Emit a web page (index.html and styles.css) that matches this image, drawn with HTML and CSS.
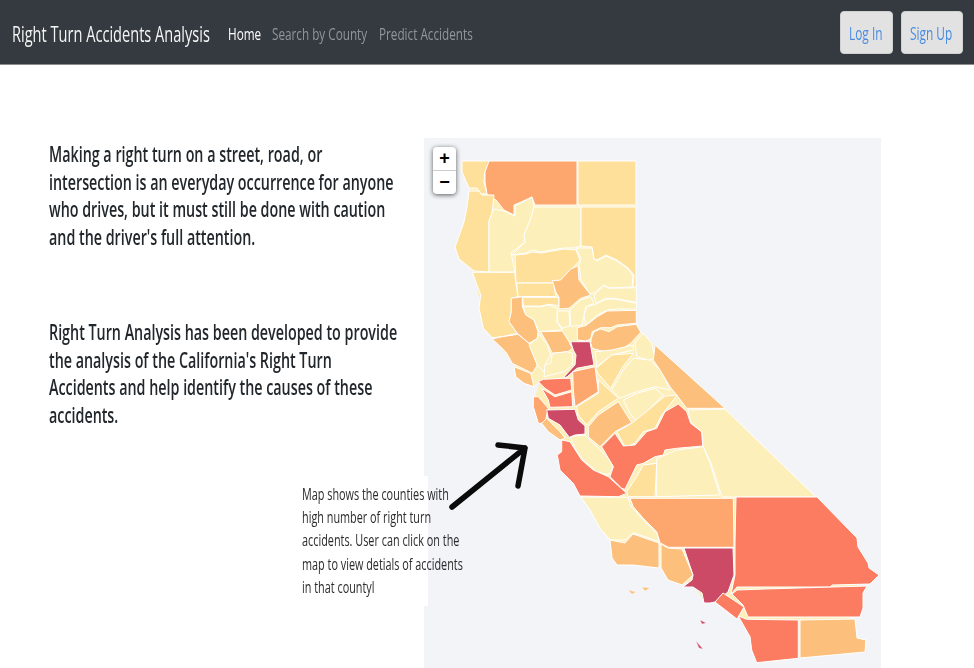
FILE: index.html
```html
<!DOCTYPE html>
<html lang="en">
<head>
<meta charset="utf-8">
<title>Right Turn Accidents Analysis</title>
<link rel="stylesheet" href="styles.css">
</head>
<body>
<nav class="navbar">
  <a class="brand"><span class="sq">Right Turn Accidents Analysis</span></a>
  <a class="link link-home"><span class="sq">Home</span></a>
  <a class="link link-search"><span class="sq">Search by County</span></a>
  <a class="link link-predict"><span class="sq">Predict Accidents</span></a>
  <div class="actions">
    <button class="btn btn-login"><span class="sq">Log In</span></button>
    <button class="btn btn-signup"><span class="sq">Sign Up</span></button>
  </div>
</nav>
<main class="content">
  <section class="intro">
    <p class="para"><span class="sq-block">Making a right turn on a street, road, or<br>intersection is an everyday occurrence for anyone<br>who drives, but it must still be done with caution<br>and the driver's full attention.</span></p>
    <p class="para"><span class="sq-block">Right Turn Analysis has been developed to provide<br>the analysis of the California's Right Turn<br>Accidents and help identify the causes of these<br>accidents.</span></p>
  </section>
  <section class="map">
    <svg class="map-svg" width="457" height="530" viewBox="424 138 457 530">
      <polygon class="state" points="462,161 636,161 636,323 640,332 725,408 810,497 850,540 860,575 855,593 850,617 850,640 845,650 760,660 752,637 740,618 717,602 704,601 693,585 668,578 663,566 633,563 619,563 612,540 602,528 583,497 575,483 559,455 564,442 543,423 535,397 540,382 534,385 516,367 494,339 481,308 474,272 461,259 457,247 469,207 471,191 464,172"/>
      <g class="counties">
        <polygon class="c2" points="462,161 491,161 485,172 484,182 487,194 481,194 477,188 469,188 462,172"/>
        <polygon class="c4" points="489,161 577,161 577,205 535,205 532,197 521,202 514,205 514,215 504,210 496,200 487,194 485,182 485,172"/>
        <polygon class="c2" points="578,161 636,161 636,205 578,205"/>
        <polygon class="c2" points="469,191 479,191 482,195 494,195 492,213 489,221 489,272 474,271 459,259 455,247 464,222 467,207"/>
        <polygon class="c1" points="494,209 504,211 515,216 515,206 532,197 534,207 531,218 524,235 525,242 511,253 515,272 489,272 489,221 492,213"/>
        <polygon class="c1" points="534,207 581,207 581,246 574,248 564,248 551,250 541,252 532,250 526,253 512,255 525,242 524,235 531,218"/>
        <polygon class="c2" points="581,207 636,207 636,287 633,287 634,275 628,268 617,260 606,255 597,260 594,259 592,247 581,246"/>
        <polygon class="c2" points="515,255 526,254 532,252 541,253 564,249 576,250 580,260 571,270 561,281 552,283 516,283"/>
        <polygon class="c1" points="576,248 592,248 594,259 597,261 606,256 617,261 628,269 633,276 632,287 609,288 604,285 594,293 590,294 581,280 579,265 581,259"/>
        <polygon class="c2" points="472.3,272.3 514.7,272.3 515.7,281.7 518,296.7 511.3,298.3 511.3,311.7 509,321.7 517.3,333.3 502.3,336.7 492.3,337.7 483.3,328.3 479,308.3 480.7,295"/>
        <polygon class="c2" points="516.7,283 553.3,283 556,296.5 518,296.5"/>
        <polygon class="c2" points="522.7,297.3 559,297.3 559,305.7 549,304.3 540.7,306 523.3,306"/>
        <polygon class="c3" points="578,265.7 579,280 590.7,295 580.7,298.3 569,308.3 559,309 559,297.3 555.7,291.7 552.3,280.7 560.7,280 570.7,269"/>
        <polygon class="c1" points="609,288.3 636.3,287.7 636.3,302.3 614,298.3 605.7,298.3 595.7,303.3 594,295 604,285.7"/>
        <polygon class="c1" points="595.7,304.3 605.7,299.3 614,299 636.3,303.3 636.3,309 615.7,309 607.3,310 597.3,315 585.7,325 584,315 587.3,306.7"/>
        <polygon class="c1" points="590.7,296.7 594,303.3 585.7,306.7 584,315 582.3,325 570.7,326.7 570,310 580.7,300"/>
        <polygon class="c3" points="585.7,325.7 597.3,316.7 607.3,311 636.3,310.3 636.3,323.3 617.3,325 610.7,327.7 600.7,327.7 592.3,331.7 590.7,339 585.7,341 577.3,340 577.3,327.7"/>
        <polygon class="c3" points="591.3,338.3 594,331.7 600.7,329 609,331.7 617.3,326.7 636.3,324.3 640.7,332.3 630.7,343.3 620.7,350 604,351.7 592.3,348.3 590.7,343.3"/>
        <polygon class="c1" points="557.3,311 569,311 569.7,325.7 562.3,328.3 557.3,321.7"/>
        <polygon class="c1" points="523.3,306.7 540.7,306.7 549,305 557.3,308.3 556.7,321.7 562.3,330 539,331.7 534,320 525.7,315"/>
        <polygon class="c3" points="511.3,298.3 522.3,296.7 522.3,306.7 525.7,315 534,320 538,331.7 537.3,338.3 529,343.3 517.3,333.3 509,321.7 511.3,311.7"/>
        <polygon class="c3" points="492.3,339 502.3,336.7 518,334.3 529,343.3 537.3,365 532.3,373.3 522.3,368.3 512.3,363.3 505.7,351.7"/>
        <polygon class="c1" points="539,333.3 547.3,345 550.7,355 545.7,363.3 544,372.3 537.3,365 529,345 537.3,338.3"/>
        <polygon class="c3" points="540.7,331.7 562.3,331 569,341.7 572.3,348.3 568,351.7 552.3,353.3 547.3,343.3"/>
        <polygon class="c1" points="552.3,353.3 567.3,351.7 572.3,353.3 572.3,365 564,371.7 544,376.7 544.7,365 550.7,363.3"/>
        <polygon class="c3" points="514,366.7 522.3,370 530.7,373.3 534,386.7 524,383.3 515.7,376.7"/>
        <polygon class="c6" points="570.7,341.7 590,341.7 594,365 576.7,368.3 567.3,376.7 562.7,378.3 575,365 576,355 573.3,350"/>
        <polygon class="c4" points="572.7,371.7 595,366.7 598.3,391.7 575,406.7 573.3,390"/>
        <polygon class="c1" points="595,351.7 611.7,350 633.3,345 633.3,350 611.7,355 596.7,366.7"/>
        <polygon class="c2" points="596,368.3 611.7,355 633.3,353.3 621.7,368.3 610.7,388.3 598.3,374"/>
        <polygon class="c1" points="611.7,390 623.3,370 633.3,358.3 650,360 661.7,371.7 670,390 655,386.7 636.7,391.7 623.3,396.7 620,398.3"/>
        <polygon class="c1" points="635,341.7 643.3,333.3 651.7,343.3 655,358.3 648.3,360 636.7,356.7"/>
        <polygon class="c3" points="655,345 725,408.3 686.7,408.3 676.7,395 670,386.7 660,370 653.3,360"/>
        <polygon class="c2" points="598.3,380 618.3,398.3 598.3,411.7 586.7,425 578.3,415 576.7,406.7 598.3,393.3"/>
        <polygon class="c1" points="623.3,400 636.7,393.3 655,388.3 663.3,395 648.3,410 636.7,421.7 630,413.3"/>
        <polygon class="c2" points="616.7,431.7 631.7,423.3 648.3,410 665,396 677.3,395 661.7,415 655,428.3 643.3,431.7 635,443.3 625,446.7"/>
        <polygon class="c3" points="588.3,426.7 598.3,415 618.3,401.7 631.7,422.7 615,431.7 600,446.7 588.3,436.7"/>
        <polygon class="c5" points="601.7,446.7 615,433.3 623.3,446 635,445 646.7,431.7 656.7,428.3 665,411.7 678.3,404 686.7,411.7 690.7,423.3 701.7,431.7 702.7,446 676.7,448.3 665,450 663.3,455 655,456.7 643.3,463.3 636.7,465 625,489.3 621.7,488.3 610,476.7 613.3,466.7"/>
        <polygon class="c1" points="570,436.7 585,435 598.3,448.3 608.3,458.3 613.3,466.7 608.3,475 596.7,471.7 583.3,460 575,448.3"/>
        <polygon class="c5" points="561.7,440 570,441.7 581.7,460 593.3,470 608.3,476.7 626.7,493.3 618.3,496.7 580,496 573.3,483.3 560,470 557.3,455 561.7,451.7"/>
        <polygon class="c2" points="626.7,491.7 636.7,476.7 643.3,465 656.7,463.3 655,496.7 628.3,496.7"/>
        <polygon class="c1" points="656.7,458.3 665,455 676.7,450 703.3,446.7 710,463.3 720,495 656.7,496.7"/>
        <polygon class="c1" points="688,410 725,409 816,497 722,497 711,463 703,446 702,432 691,423"/>
        <polygon class="c1" points="581,497 628.3,497.3 630,505 643.3,520 656.7,533.3 659.3,541.7 633.3,532.7 625,540 610,540 600,528.3 590,510"/>
        <polygon class="c4" points="630,498.3 733.3,498.3 734,547.3 683.3,547.3 668.3,547.3 660,542.7 656.7,531.7 643.3,518.3 633.3,506.7"/>
        <polygon class="c5" points="736,497 817,497 857,538 858,547 868,563 869,568 879,575 870,584 832,585 830,587 765,587 737,587 731,594 735,575 735,543"/>
        <polygon class="c6" points="684,548 733,548 734,575 728,592 715,602 710,603 704,603 702,593 693,587 683,587 692,580 693,575"/>
        <polygon class="c3" points="661,544 668,548 682,549 693,575 682,585 668,580 661,568"/>
        <polygon class="c3" points="610,540 625,543 633,534 659,543 659,568 633,565 617,565 612,558"/>
        <polygon class="c5" points="723,593 744,607 737,619 715,602"/>
        <polygon class="c5" points="737,590 765,589 832,587 867,586 863,593 863,608 860,617 748,617 743,605 732,594"/>
        <polygon class="c5" points="738.3,616 746.7,619.3 798.3,620 798.3,658.3 756.7,662.7 751.7,650 750,636.7"/>
        <polygon class="c3" points="800,620 855,619 857,638 866,640 865,652 800,658"/>
        <polygon class="c4" points="533.3,396.7 538.3,396.7 548.3,408.3 546.7,415 545,423.3 538.3,423.3 533.3,406.7"/>
        <polygon class="c5" points="538.3,381.7 543.3,379.3 563.3,378.3 570.7,378.3 571.7,390 555,395 545,388.3"/>
        <polygon class="c5" points="541.7,388.3 555,396.7 571.7,391.7 572.7,406.7 550,407.3 548.3,400"/>
        <polygon class="c3" points="541.7,423.3 546.7,418.3 560,431.7 565,438.3 560,440 548.3,431.7"/>
        <polygon class="c6" points="546.7,410 575,409.3 578.3,420 585,426 585,434 575,435 569.3,437.3 560,425 548.3,418.3"/>
        <polygon class="c3 thin" points="628,590 636,592 632,594"/>
        <polygon class="c3 thin" points="642,587 650,588 645,591"/>
        <polygon class="c6 thin" points="700,620 706,623 702,624"/>
        <polygon class="c6 thin" points="696,641 703,649 699,648"/>
      </g>
    </svg>
    <div class="zoom">
      <a class="zoom-btn zoom-in">+</a>
      <a class="zoom-btn">&minus;</a>
    </div>
    <svg class="arrow" width="84" height="72" viewBox="448 442 84 72">
      <path d="M452 507 L525 448 M498 445 L525 448 L518 486"/>
    </svg>
    <p class="caption"><span class="sq-block">Map shows the counties with<br>high number of right turn<br>accidents. User can click on the<br>map to view detials of accidents<br>in that countyl</span></p>
  </section>
</main>
</body>
</html>
```
FILE: styles.css
```css
* { box-sizing: border-box; }
html, body { margin: 0; height: 668px; overflow: hidden; background: #fff; }
body { font-family: "Open Sans", "Noto Sans", sans-serif; color: #212529; }
.sq { display: inline-block; white-space: nowrap; transform: scaleX(.69); transform-origin: left center; }
.sq-block { display: block; white-space: nowrap; transform: scaleX(.65); transform-origin: left top; }
.navbar { display: flex; align-items: center; height: 65px; padding: 0 11px 0 12px; background: #343a40; border-bottom: 1px solid #8b8e91; }
.brand { width: 216px; padding-top: 2px; font-size: 22px; color: #f4f5f5; }
.brand .sq { transform: scaleX(.663); }
.link { padding-top: 3px; font-size: 17px; color: #92969a; }
.link-home { width: 44px; color: #fff; }
.link-search { width: 107px; }
.link-predict { width: 100px; }
.actions { display: flex; gap: 8px; margin-left: auto; }
.btn { height: 43px; padding: 2px 0 0; border: 1px solid #d0d0d0; border-radius: 4px; background: #e2e2e2; color: #4a8be0; font: 18px "Open Sans", sans-serif; text-align: left; }
.btn .sq { margin-left: 8px; transform: scaleX(.66); }
.btn-login { width: 53px; }
.btn-signup { width: 62px; }
.content { display: flex; align-items: flex-start; }
.intro { width: 424px; padding: 75px 0 0 49px; }
.para { margin: 0 0 67px; font-size: 22px; font-weight: 600; line-height: 27.7px; color: #22272b; }
.map { position: relative; width: 457px; height: 530px; margin-top: 73px; background: #f2f4f8; }
.map-svg { display: block; filter: blur(.35px); }
.state { fill: #fdefb9; }
.counties polygon { stroke: #fff; stroke-width: 1; stroke-linejoin: round; }
.counties .thin { stroke-width: .3; }
.c1 { fill: #fdefb9; }
.c2 { fill: #fee09a; }
.c3 { fill: #fdc07c; }
.c4 { fill: #fda76f; }
.c5 { fill: #fc7c61; }
.c6 { fill: #cd4a66; }
.zoom { position: absolute; left: 9px; top: 9px; width: 23px; border-radius: 4px; background: #fff; box-shadow: 0 1px 5px rgba(0,0,0,.65); }
.zoom-btn { display: block; height: 23px; font: bold 18px/22px "Liberation Sans", sans-serif; text-align: center; color: #000; }
.zoom-in { height: 24px; border-bottom: 1px solid #ccc; }
.arrow { position: absolute; left: 24px; top: 304px; }
.arrow path { fill: none; stroke: #0b0b0b; stroke-width: 5.5; stroke-linecap: round; stroke-linejoin: round; }
.caption { position: absolute; left: -135px; top: 338px; width: 139px; height: 130px; margin: 0; padding: 7px 0 0 13px; background: #fff; font-size: 15.5px; line-height: 23.2px; color: #2b2b2b; }
.caption .sq-block { transform: scaleX(.7); }
```
